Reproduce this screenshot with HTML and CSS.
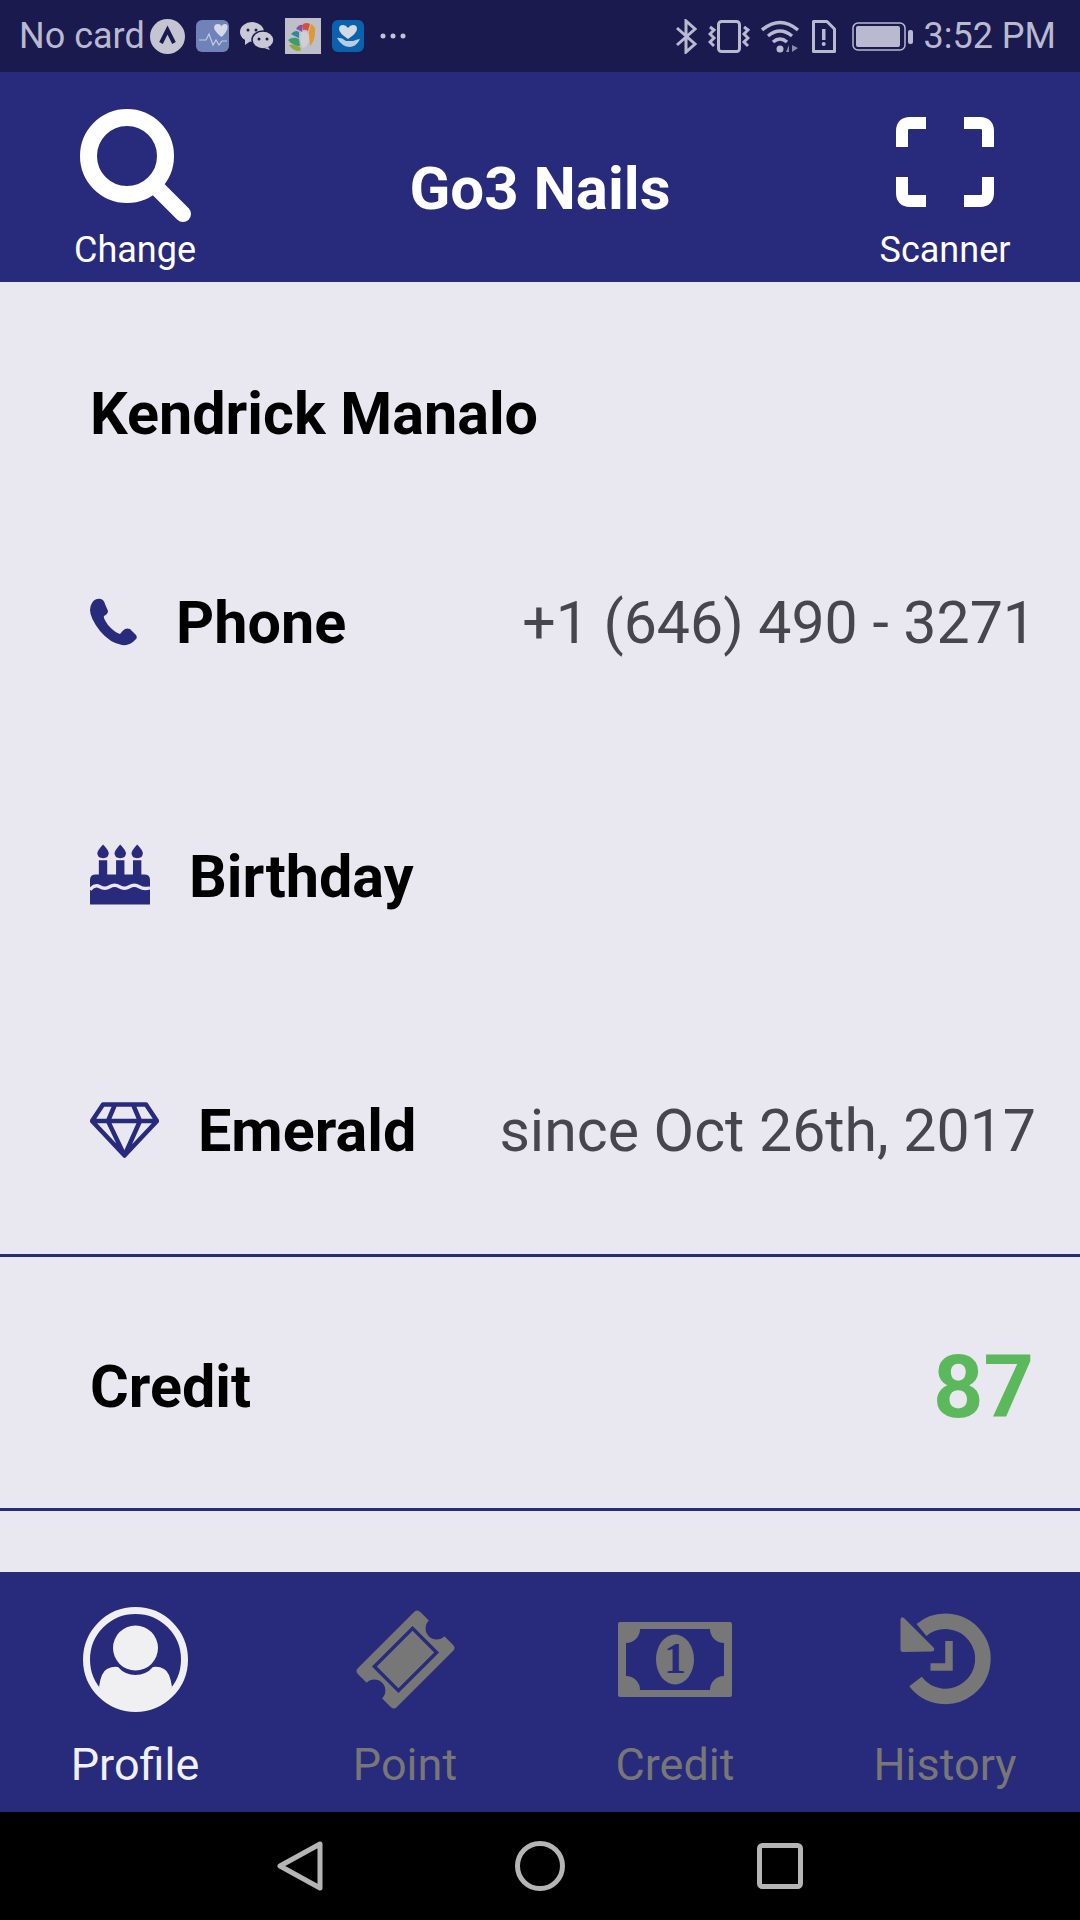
FILE: index.html
```html
<!DOCTYPE html>
<html lang="en">
<head>
    <meta charset="UTF-8">
    <meta name="viewport" content="width=device-width, initial-scale=1.0">
    <title>Go3 Nails</title>
    <link rel="stylesheet" href="styles.css">
</head>
<body>
    <div class="status-bar">
        <div class="status-left">
            <span class="status-text">No card</span>
            <svg class="status-first" width="35" height="35" viewBox="0 0 35 35"><circle cx="17.5" cy="17.5" r="17.5" fill="#c4c4d2"/><path d="M11 24 L17.5 11 L24 24" fill="none" stroke="#1a1a4f" stroke-width="4"/></svg>
            <svg width="33" height="32" viewBox="0 0 33 32"><rect width="33" height="32" rx="6" fill="#6f83b8"/><path d="M18 8 Q18 4 22 4 Q25 4 25.500 6.500 Q26 4 29 4 Q32 4 31.500 8 Q31 12 25.500 17 Q19 12 18 8Z" fill="#d5d8e6"/><path d="M3 20 H10 L13 14 L17 25 L20 20 L23 25 L26 21 H31" fill="none" stroke="#c4cbe2" stroke-width="1.200"/></svg>
            <svg width="34" height="28" viewBox="0 0 34 28"><ellipse cx="12" cy="10" rx="12" ry="10" fill="#c9c9d6"/><path d="M5 16 L5 23 L12 18Z" fill="#c9c9d6"/><ellipse cx="23" cy="18" rx="11" ry="9" fill="#c9c9d6" stroke="#1a1a4f" stroke-width="1.500"/><path d="M28 25 L30 28 L24 26Z" fill="#c9c9d6"/><circle cx="8" cy="8" r="1.500" fill="#1a1a4f"/><circle cx="16" cy="8" r="1.500" fill="#1a1a4f"/><circle cx="19" cy="17" r="1.500" fill="#1a1a4f"/><circle cx="27" cy="17" r="1.500" fill="#1a1a4f"/></svg>
            <svg width="36" height="36" viewBox="0 0 36 36"><rect width="36" height="36" fill="#bfbfc9"/><path d="M3 22 Q8 18 14 21 L15 28 Q8 28 3 22Z" fill="#3f9a70"/><path d="M4 27 Q9 26 15 29 Q17 33 14 33 Q8 33 4 27Z" fill="#8fa83a"/><path d="M6 16 Q10 11 14 14 L14 20 Q9 18 6 16Z" fill="#2f8a9a"/><path d="M11 11 Q14 6 18 7 L17 14 Q14 12 11 11Z" fill="#8c4fa0"/><path d="M18 6 Q22 4 25 6 L23 13 Q21 11 18 12Z" fill="#d8503a"/><path d="M26 6 Q31 8 30 16 Q29 24 25 28 L24 14Z" fill="#e0982f"/><path d="M16 14 Q24 12 24 20 Q24 28 18 30 Q14 26 16 14Z" fill="#cfcfd8"/></svg>
            <svg width="32" height="32" viewBox="0 0 32 32"><rect width="32" height="32" rx="6" fill="#0a62ad"/><path d="M16 19 Q7 13 7 9 Q7 5 11 5 Q14 5 16 8 Q18 5 21 5 Q25 5 25 9 Q25 13 16 19Z" fill="#d5d9e4"/><path d="M5 18 Q9 17 14 21 L21 21 Q26 19 28 19 Q25 26 18 27 Q10 27 5 18Z" fill="#b7cde2"/></svg>
            <svg class="status-dots" width="26" height="6" viewBox="0 0 26 6"><circle cx="3" cy="3" r="2.500" fill="#c4c4d2"/><circle cx="13" cy="3" r="2.500" fill="#c4c4d2"/><circle cx="23" cy="3" r="2.500" fill="#c4c4d2"/></svg>
        </div>
        <div class="status-right">
            <svg width="21" height="35" viewBox="0 0 21 35"><path d="M1 9 L19 25 L10 33 V2 L19 10 L1 26" fill="none" stroke="#b9b9cf" stroke-width="3"/></svg>
            <svg width="42" height="33" viewBox="0 0 42 33"><rect x="10.500" y="1.500" width="21" height="30" rx="3" fill="none" stroke="#b9b9cf" stroke-width="3"/><path d="M2 7 L6 10 L2 14 L6 18 L2 22 L6 26" fill="none" stroke="#b9b9cf" stroke-width="3"/><path d="M36 7 L40 10 L36 14 L40 18 L36 22 L40 26" fill="none" stroke="#b9b9cf" stroke-width="3"/></svg>
            <svg width="39" height="33" viewBox="0 0 39 33"><path d="M1 10 Q19 -5 37 10" fill="none" stroke="#b9b9cf" stroke-width="3.500"/><path d="M7 16 Q19 6 31 16" fill="none" stroke="#b9b9cf" stroke-width="3.500"/><path d="M12 22 Q19 16 26 22" fill="none" stroke="#b9b9cf" stroke-width="3.500"/><circle cx="19" cy="29" r="3.500" fill="#b9b9cf"/><path d="M28 32 V25 L25 32Z M31 25 V32 L37 28Z" fill="#8d8dab"/></svg>
            <svg width="25" height="33" viewBox="0 0 25 33"><path d="M2.500 1.500 H16 L23.500 9 V31.500 H2.500Z" fill="none" stroke="#b9b9cf" stroke-width="3" stroke-linejoin="round"/><rect x="11" y="9" width="3.500" height="11" fill="#b9b9cf"/><circle cx="12.700" cy="24" r="2" fill="#b9b9cf"/></svg>
            <svg class="status-battery" width="61" height="29" viewBox="0 0 61 29"><rect x="1" y="1" width="52" height="27" rx="5" fill="none" stroke="#b9b9cf" stroke-width="1.500"/><rect x="4" y="4" width="44" height="21" rx="2" fill="#b9b9cf"/><rect x="56" y="8" width="5" height="14" rx="2" fill="#b9b9cf"/></svg>
            <span class="status-text">3:52 PM</span>
        </div>
    </div>

    <header class="top-bar">
        <div class="top-action">
            <svg class="top-icon search-icon" width="112" height="114" viewBox="0 0 112 114"><circle cx="47" cy="47" r="38.500" fill="none" stroke="#fff" stroke-width="17"/><path d="M75 77 L103 105" stroke="#fff" stroke-width="16" stroke-linecap="round"/></svg>
            <span class="top-label">Change</span>
        </div>
        <h1 class="app-title">Go3 Nails</h1>
        <div class="top-action">
            <svg class="top-icon scan-icon" width="98" height="90" viewBox="0 0 98 90"><path d="M30 6 H14 Q6 6 6 14 V30 M68 6 H84 Q92 6 92 14 V30 M30 84 H14 Q6 84 6 76 V60 M68 84 H84 Q92 84 92 76 V60" fill="none" stroke="#fff" stroke-width="12"/></svg>
            <span class="top-label">Scanner</span>
        </div>
    </header>

    <main class="content">
        <div class="row name-row">
            <span class="label">Kendrick Manalo</span>
        </div>
        <div class="row">
            <div class="row-title">
                <svg width="47" height="48" viewBox="0 0 47 48"><path d="M2 5 Q5 0 11 1 Q14 2 15 6 L18 13 Q18 16 14 18 Q13 20 18 27 Q24 34 30 36 Q32 33 35 31 Q37 30 40 31 L46 37 Q48 40 45 42 Q40 48 32 47 Q20 45 10 33 Q0 20 0 12 Q0 8 2 5Z" fill="#282a7b"/></svg>
                <span class="label">Phone</span>
            </div>
            <span class="value">+1 (646) 490 - 3271</span>
        </div>
        <div class="row">
            <div class="row-title">
                <svg class="cake-icon" width="60" height="61" viewBox="0 0 61 61"><g fill="#282a7b"><path d="M13.300 0 Q19 6 19 9 Q19 14 13.300 14 Q7.500 14 7.500 9 Q7.500 6 13.300 0Z"/><path d="M30.700 0 Q36.500 6 36.500 9 Q36.500 14 30.700 14 Q25 14 25 9 Q25 6 30.700 0Z"/><path d="M48 0 Q53.700 6 53.700 9 Q53.700 14 48 14 Q42.300 14 42.300 9 Q42.300 6 48 0Z"/><rect x="9" y="16" width="8.500" height="17"/><rect x="26.500" y="16" width="8.500" height="17"/><rect x="43.700" y="16" width="8.500" height="17"/><path d="M0 36 Q0 30.500 6 30.500 H55 Q61 30.500 61 36 V61 H0Z"/></g><path d="M0 46 Q5 40 10 43 T20 43 T30 43 T40 43 T50 43 T61 44" fill="none" stroke="#e9e8f0" stroke-width="3.500"/></svg>
                <span class="label">Birthday</span>
            </div>
        </div>
        <div class="row">
            <div class="row-title">
                <svg width="69" height="56" viewBox="0 0 69 56"><path d="M13 2.500 H56 L67 19 L34.500 53.500 L2 19Z M2 19 H67 M25 2.500 L18 19 L34.500 53.500 L50 19 L43 2.500" fill="none" stroke="#282a7b" stroke-width="4.500" stroke-linejoin="round"/></svg>
                <span class="label">Emerald</span>
            </div>
            <span class="value">since Oct 26th, 2017</span>
        </div>
        <div class="row credit-row">
            <span class="label">Credit</span>
            <span class="credit-amount">87</span>
        </div>
    </main>

    <nav class="tab-bar">
        <div class="tab active">
            <svg width="105" height="105" viewBox="0 0 105 105"><circle cx="52.500" cy="52.500" r="49" fill="none" stroke="#f0f0f2" stroke-width="7"/><circle cx="52.500" cy="41" r="22.500" fill="#f0f0f2"/><path d="M16 80 Q18 65 24 62 Q30 59 35 60 Q42 68 52.500 68 Q63 68 70 60 Q76 59 81 62 Q87 65 89 80 Q75 102 52.500 102 Q30 102 16 80Z" fill="#f0f0f2"/></svg>
            <span class="tab-label">Profile</span>
        </div>
        <div class="tab">
            <svg width="105" height="105" viewBox="0 0 105 105"><g transform="translate(52.500 52.500) rotate(-45)"><path d="M-44 -23 Q-44 -27.500 -40 -27.500 H40 Q44 -27.500 44 -23 V-11 A11 11 0 0 0 44 11 V23 Q44 27.500 40 27.500 H-40 Q-44 27.500 -44 23 V11 A11 11 0 0 0 -44 -11Z" fill="#777"/><rect x="-27" y="-17" width="54" height="34" fill="none" stroke="#282a7b" stroke-width="3.500"/></g></svg>
            <span class="tab-label">Point</span>
        </div>
        <div class="tab">
            <svg width="114" height="105" viewBox="0 0 114 105"><rect x="0" y="15" width="114" height="75" rx="2" fill="#777"/><path d="M22 22 H92 A14 14 0 0 0 106 36 V69 A14 14 0 0 0 92 83 H22 A14 14 0 0 0 8 69 V36 A14 14 0 0 0 22 22Z" fill="#282a7b"/><ellipse cx="57" cy="52.500" rx="19" ry="25" fill="#777"/><text x="57" y="66" class="bill-digit">1</text></svg>
            <span class="tab-label">Credit</span>
        </div>
        <div class="tab">
            <svg width="105" height="105" viewBox="0 0 105 105"><path d="M28.500 23 A37.500 37.500 0 1 1 22.500 74.500" fill="none" stroke="#777" stroke-width="15.500"/><path d="M7.500 12 Q8.500 9 11 11 L41 41 Q42 44 39 44.500 L10 45 Q7.500 45 7.500 43Z" fill="#777"/><path d="M56 34 V60 H37.500" fill="none" stroke="#777" stroke-width="7.500"/></svg>
            <span class="tab-label">History</span>
        </div>
    </nav>

    <div class="nav-bar">
        <svg width="46" height="50" viewBox="0 0 46 50"><path d="M43 3 V47 L3 25Z" fill="none" stroke="#b5b5b5" stroke-width="5" stroke-linejoin="round"/></svg>
        <svg width="50" height="50" viewBox="0 0 50 50"><circle cx="25" cy="25" r="22.500" fill="none" stroke="#b5b5b5" stroke-width="5"/></svg>
        <svg width="46" height="46" viewBox="0 0 46 46"><rect x="2.500" y="2.500" width="41" height="41" rx="3" fill="none" stroke="#b5b5b5" stroke-width="5"/></svg>
    </div>
</body>
</html>
```

FILE: styles.css
```css
body {
    font-family: 'Roboto', sans-serif;
    margin: 0;
    padding: 0;
    width: 1080px;
    height: 1920px;
    display: flex;
    flex-direction: column;
    background-color: #e9e8f0;
    overflow: hidden;
}
svg {
    display: block;
    flex-shrink: 0;
}
.status-bar {
    height: 72px;
    background-color: #1a1a4f;
    display: flex;
    align-items: center;
    justify-content: space-between;
    padding: 0 24px 0 19px;
}
.status-left,
.status-right {
    display: flex;
    align-items: center;
    gap: 11px;
}
.status-text {
    font-size: 36px;
    color: #b9b9cf;
}
.status-first {
    margin-left: -6px;
}
.status-dots {
    margin-left: 5px;
}
.status-battery {
    margin-left: 5px;
}
.top-bar {
    height: 210px;
    background-color: #282a7b;
    display: grid;
    grid-template-columns: 270px 1fr 270px;
    align-items: center;
}
.top-action {
    display: flex;
    flex-direction: column;
    align-items: center;
    height: 210px;
}
.top-icon {
    margin-top: 37px;
    height: 114px;
}
.search-icon {
    margin-left: 2px;
}
.scan-icon {
    margin-top: 45px;
    height: 90px;
    margin-bottom: 16px;
}
.top-label {
    font-size: 36px;
    color: #ffffff;
    line-height: 42px;
    margin-top: 6px;
}
.app-title {
    margin: 0;
    padding-top: 22px;
    font-size: 60px;
    font-weight: 700;
    color: #ffffff;
    text-align: center;
}
.content {
    flex: 1;
}
.row {
    height: 254px;
    padding: 0 44px 0 90px;
    display: flex;
    align-items: center;
    justify-content: space-between;
}
.name-row {
    height: 163px;
    padding-top: 50px;
}
.row-title {
    display: flex;
    align-items: center;
    gap: 39px;
}
.cake-icon {
    margin-bottom: 4px;
}
.label {
    font-size: 59.3px;
    font-weight: 700;
    color: #000000;
}
.value {
    font-size: 59px;
    color: #46464c;
}
.credit-row {
    height: 243px;
    margin-top: -3px;
    padding-top: 8px;
    border-top: 3px solid #282a7b;
    border-bottom: 3px solid #282a7b;
}
.credit-amount {
    font-size: 88px;
    font-weight: 700;
    color: #5cb85c;
    margin-right: 2px;
}
.tab-bar {
    height: 240px;
    background-color: #282a7b;
    display: grid;
    grid-template-columns: repeat(4, 270px);
}
.tab {
    display: flex;
    flex-direction: column;
    align-items: center;
    padding-top: 35px;
}
.tab-label {
    font-size: 45px;
    color: #777777;
    line-height: 54px;
    margin-top: 26px;
}
.tab.active .tab-label {
    color: #f0f0f2;
}
.bill-digit {
    font-family: 'Liberation Serif', serif;
    font-size: 44px;
    font-weight: 700;
    fill: #282a7b;
    text-anchor: middle;
}
.nav-bar {
    height: 108px;
    background-color: #000000;
    display: flex;
    align-items: center;
    justify-content: center;
    gap: 192px;
}
```
